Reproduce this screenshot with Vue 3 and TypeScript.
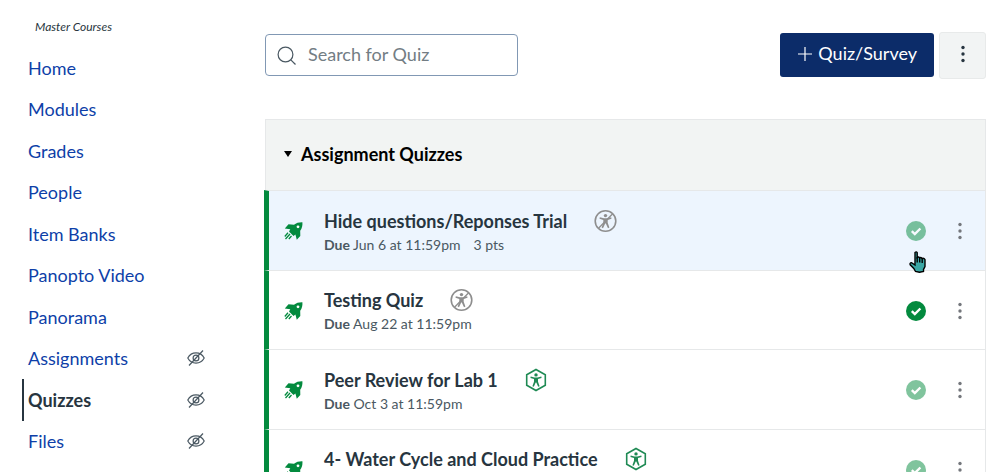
<script setup lang="ts">
import { ref } from 'vue'

interface NavItem {
  label: string
  hidden?: boolean
  active?: boolean
}

interface Quiz {
  title: string
  due?: string
  points?: string
  badge: 'off' | 'ok'
  published: boolean
  hovered?: boolean
}

const navItems: NavItem[] = [
  { label: 'Home' },
  { label: 'Modules' },
  { label: 'Grades' },
  { label: 'People' },
  { label: 'Item Banks' },
  { label: 'Panopto Video' },
  { label: 'Panorama' },
  { label: 'Assignments', hidden: true },
  { label: 'Quizzes', hidden: true, active: true },
  { label: 'Files', hidden: true },
]

const quizzes: Quiz[] = [
  { title: 'Hide questions/Reponses Trial', due: 'Jun 6 at 11:59pm', points: '3 pts', badge: 'off', published: false, hovered: true },
  { title: 'Testing Quiz', due: 'Aug 22 at 11:59pm', badge: 'off', published: true },
  { title: 'Peer Review for Lab 1', due: 'Oct 3 at 11:59pm', badge: 'ok', published: false },
  { title: '4- Water Cycle and Cloud Practice', badge: 'ok', published: false },
]

const search = ref('')
const open = ref(true)
</script>

<template>
  <div class="page">
    <aside class="sidebar">
      <p class="term">Master Courses</p>
      <nav class="nav" aria-label="Course">
        <a v-for="item in navItems" :key="item.label" href="#" class="nav-link" :class="{ active: item.active }">
          <span>{{ item.label }}</span>
          <svg v-if="item.hidden" class="eye" viewBox="0 0 18 18" aria-hidden="true">
            <path d="M0.8 9C2.6 5.6 5.5 3.9 9 3.9S15.400 5.600 17.200 9C15.400 12.400 12.500 14.100 9 14.100S2.600 12.400 0.800 9Z" />
            <circle cx="9" cy="9" r="2.900" />
            <path d="M2 16.500 16 1.500" />
          </svg>
        </a>
      </nav>
    </aside>

    <main class="main">
      <div class="toolbar">
        <label class="search">
          <svg viewBox="0 0 20 20" aria-hidden="true">
            <circle cx="8.500" cy="8.500" r="7.400" />
            <path d="M13.800 13.800 18.500 18.500" />
          </svg>
          <input v-model="search" type="text" placeholder="Search for Quiz" aria-label="Search for Quiz" />
        </label>
        <div class="actions">
          <button class="add" type="button">
            <svg viewBox="0 0 16 16" aria-hidden="true"><path d="M8 1v14M1 8h14" /></svg>
            <span>Quiz/Survey</span>
          </button>
          <button class="more" type="button" aria-label="More options">
            <svg class="dots" viewBox="0 0 6 18" aria-hidden="true">
              <circle cx="3" cy="2.500" r="1.700" /><circle cx="3" cy="9" r="1.700" /><circle cx="3" cy="15.500" r="1.700" />
            </svg>
          </button>
        </div>
      </div>

      <section class="group">
        <h2 class="group-head">
          <button type="button" :aria-expanded="open" @click="open = !open">
            <svg viewBox="0 0 8 6" aria-hidden="true"><path d="M0 0h8L4 6Z" /></svg>
            <span>Assignment Quizzes</span>
          </button>
        </h2>
        <ul v-show="open" class="list">
          <li v-for="quiz in quizzes" :key="quiz.title" class="row" :class="{ hovered: quiz.hovered }">
            <svg class="rocket" viewBox="0 0 20 20" aria-hidden="true">
              <path d="M18.400 1.300C15 1.200 12.200 2 10 3.800L4.500 3.200 0.800 7.500 6.300 8.300 5 10.600 9.500 15 11.400 13.600 12.800 18.700 16.300 15 16.200 9.800C18 7.500 18.700 4.500 18.400 1.300Z" />
              <circle class="port" cx="14" cy="5.800" r="1.400" />
              <path class="flame" d="M0.800 15.500 4 11.800M1.500 18 6 13M4.800 18 7.500 15" />
            </svg>
            <div class="info">
              <div class="title-line">
                <a href="#" class="title">{{ quiz.title }}</a>
                <svg v-if="quiz.badge === 'off'" class="badge off" viewBox="0 0 24 24" role="img" aria-label="Accessibility not checked">
                  <circle class="ring" cx="11.500" cy="12" r="10.300" />
                  <path class="slash" d="M4.500 19.200 18.700 4.800" />
                  <circle cx="11.500" cy="6.600" r="1.700" />
                  <path d="M5.800 8.300 10 9.300H13L17.200 8.300 17.500 9.700 13.700 11V13.800L15.400 18.600 14 19.200 11.800 14.600H11.200L9 19.200 7.600 18.600 9.300 13.800V11L5.500 9.700Z" />
                </svg>
                <svg v-else class="badge ok" viewBox="1 0 24 24" role="img" aria-label="Accessible">
                  <path class="ring" d="M12 1.500 21.300 6.700V17.300L12 22.500 2.700 17.300V6.700Z" />
                  <circle cx="12" cy="6.900" r="1.700" />
                  <path d="M6.700 8.600 10.500 9.400H13.500L17.300 8.600 17.600 10 14 11.100V13.700L15.600 18.200 14.200 18.800 12.300 14.600H11.700L9.800 18.800 8.400 18.200 10 13.700V11.100L6.400 10Z" />
                </svg>
              </div>
              <p class="meta">
                <span v-if="quiz.due"><b>Due</b> {{ quiz.due }}</span>
                <span v-if="quiz.points">{{ quiz.points }}</span>
              </p>
            </div>
            <button class="publish" :class="{ on: quiz.published }" type="button" :aria-label="quiz.published ? 'Published' : 'Publish'">
              <svg class="check" viewBox="0 0 20 20" aria-hidden="true">
                <circle cx="10" cy="10" r="10" />
                <path d="M5.800 10.200 8.800 13.100 14.400 7.500" />
              </svg>
              <svg v-if="quiz.hovered" class="pointer" viewBox="0 0 17 22" aria-hidden="true">
                <path d="M6 1.500Q7.300 0.300 8.200 1.600V6.500Q9.500 5.300 10.600 6.800 11.900 6 13 7.500 15 6.800 16 8.600V15.500L14.500 18.500V20.500L10.500 21.300 6.500 20.500 4.800 17.500 1.200 13.800Q0.500 11.800 2.500 11.600L6 14Z" />
                <path class="fingers" d="M8.200 6V11.500M10.700 7V11.500M13.200 8V12" />
              </svg>
            </button>
            <button class="kebab" type="button" aria-label="Quiz options">
              <svg class="dots" viewBox="0 0 6 18" aria-hidden="true">
                <circle cx="3" cy="2.500" r="1.700" /><circle cx="3" cy="9" r="1.700" /><circle cx="3" cy="15.500" r="1.700" />
              </svg>
            </button>
          </li>
        </ul>
      </section>
    </main>
  </div>
</template>

<style>
body {
  margin: 0;
  background: #fff;
}
</style>

<style scoped>
.page {
  display: flex;
  height: 100vh;
  overflow: hidden;
  box-sizing: border-box;
  padding-right: 19px;
  font-family: Lato, 'Liberation Sans', sans-serif;
  font-size: 18px;
  line-height: 24px;
  color: #273540;
}
button {
  font: inherit;
  color: inherit;
  border: 0;
  padding: 0;
  background: none;
  cursor: pointer;
}
svg {
  display: block;
  flex: none;
}
.sidebar {
  flex: none;
  width: 205px;
  margin-right: 60px;
}
.term {
  margin: 18px 0 11px 35px;
  font-size: 12px;
  line-height: 18px;
  font-style: italic;
}
.nav {
  display: grid;
  grid-auto-rows: 1fr;
  min-height: 415px;
  margin-left: 22px;
}
.nav-link {
  display: flex;
  align-items: center;
  justify-content: space-between;
  padding-left: 6px;
  color: #0e3fa8;
  text-decoration: none;
}
.nav-link.active {
  padding-left: 4px;
  border-left: 2px solid #273540;
  color: #273540;
  font-weight: 700;
}
.eye {
  width: 18px;
  height: 18px;
  fill: none;
  stroke: #4a5862;
  stroke-width: 1.2;
}
.main {
  flex: 1;
  min-width: 0;
}
.toolbar {
  display: flex;
  justify-content: space-between;
  align-items: center;
  margin-top: 32px;
  margin-bottom: 40px;
}
.search {
  display: flex;
  align-items: center;
  gap: 11px;
  width: 253px;
  height: 42px;
  margin-bottom: 1px;
  box-sizing: border-box;
  padding: 0 11px 3px;
  border: 1px solid #8198b4;
  border-radius: 4px;
}
.search svg {
  width: 20px;
  height: 20px;
  margin-top: 4px;
  fill: none;
  stroke: #4a5862;
  stroke-width: 1.2;
}
.search input {
  flex: 1;
  min-width: 0;
  padding: 0;
  border: 0;
  outline: 0;
  background: none;
  font: inherit;
  color: #273540;
}
.search input::placeholder {
  color: #737d84;
  opacity: 1;
}
.actions {
  display: flex;
  align-items: center;
  gap: 5px;
}
.add {
  display: flex;
  align-items: center;
  gap: 5px;
  height: 44px;
  margin-bottom: 1px;
  padding: 0 17px 4px;
  border-radius: 3px;
  background: #0c2c69;
  color: #fff;
}
.add svg {
  width: 16px;
  height: 16px;
  margin-top: 2px;
  fill: none;
  stroke: #fff;
  stroke-width: 1.2;
}
.more {
  display: grid;
  place-items: center;
  width: 47px;
  height: 47px;
  padding-bottom: 3px;
  border: 1px solid #e8eaea;
  border-radius: 3px;
  background: #f2f4f4;
}
.dots {
  width: 6px;
  height: 18px;
  fill: #273540;
}
.group {
  border: 1px solid #e6e8e9;
  border-bottom: 0;
}
.group-head {
  margin: 0;
  padding: 22px 18px 24px;
  background: #f2f4f3;
  font-size: 18px;
  color: #000;
}
.group-head button {
  display: flex;
  align-items: center;
  gap: 9px;
  font-weight: 700;
}
.group-head svg {
  width: 8px;
  height: 6px;
}
.list {
  display: grid;
  grid-auto-rows: 1fr;
  min-height: 318px;
  margin: 0 0 0 -2px;
  padding: 0;
  list-style: none;
}
.row {
  display: flex;
  align-items: center;
  box-sizing: border-box;
  padding: 2px 15px 0;
  border-left: 5px solid #038a3e;
  border-top: 1px solid #e6e8e9;
}
.row.hovered {
  background: #edf5fe;
}
.rocket {
  width: 20px;
  height: 20px;
  margin-right: 20px;
  fill: #038a3e;
}
.port {
  fill: #fff;
}
.flame {
  fill: none;
  stroke: #038a3e;
  stroke-width: 1.3;
}
.info {
  flex: 1;
  min-width: 0;
  padding-top: 1px;
}
.title-line {
  display: flex;
  align-items: center;
  gap: 27px;
}
.title {
  color: #273540;
  font-weight: 700;
  text-decoration: none;
}
.badge {
  width: 24px;
  height: 24px;
}
.badge .ring,
.badge .slash {
  fill: none;
  stroke-width: 1.6;
}
.badge .slash {
  stroke-width: 1.3;
}
.off {
  fill: #8e8e8e;
  stroke: none;
}
.off .ring,
.off .slash {
  stroke: #8e8e8e;
}
.ok {
  fill: #1f8a54;
}
.ok .ring {
  stroke: #1f8a54;
}
.meta {
  display: flex;
  gap: 13px;
  min-height: 20px;
  margin: 2px 0 0;
  font-size: 14px;
  line-height: 20px;
  color: #4a5862;
}
.publish {
  position: relative;
}
.check {
  width: 20px;
  height: 20px;
  fill: #038a3e;
  opacity: 0.5;
}
.on .check {
  opacity: 1;
}
.check path {
  fill: none;
  stroke: #fff;
  stroke-width: 2.4;
}
.pointer {
  position: absolute;
  left: 3px;
  top: 30px;
  width: 17px;
  height: 22px;
  fill: #3ba7a5;
  stroke: #000;
  stroke-width: 1.4;
}
.fingers {
  fill: none;
}
.kebab {
  margin-left: 24px;
  padding: 0 7px;
}
.kebab .dots {
  fill: #74777c;
}
</style>
